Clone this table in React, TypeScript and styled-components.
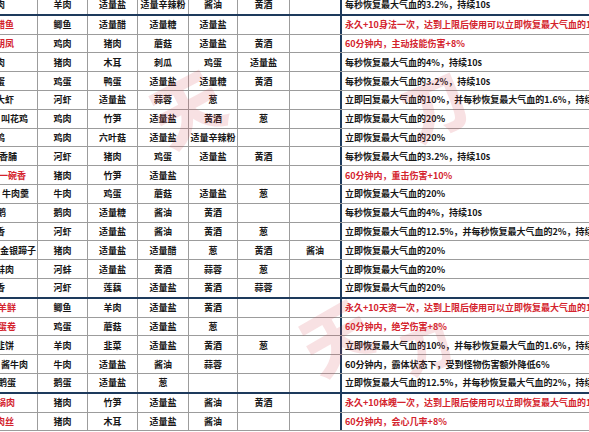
import React from "react";
import styled, { createGlobalStyle } from "styled-components";

const GlobalStyle = createGlobalStyle`
  html, body {
    margin: 0;
    padding: 0;
    background: #fff;
  }
  body {
    width: 589px;
    height: 432px;
    overflow: hidden;
    font-family: "Noto Sans CJK SC", "Noto Sans", sans-serif;
  }
`;

const NAVY = "#1d3a5c";
const GRID = "#9c9c9c";
const RED = "#d4232d";

const Sheet = styled.div`
  position: relative;
  width: 589px;
  height: 432px;
  overflow: hidden;
  background: #fff;
`;

const Table = styled.div`
  display: flex;
  flex-direction: column;
  margin-top: -4px;
`;

const Row = styled.div<{ $end?: boolean }>`
  display: grid;
  grid-template-columns: 38px 50px 50px 51px 49px 52px 50px 260px;
  box-sizing: border-box;
  height: ${(p) => (p.$end ? 19.8 : 18.8)}px;
  border-bottom: ${(p) => (p.$end ? `2px solid ${NAVY}` : `1px solid ${GRID}`)};
`;

const Cell = styled.div<{ $red?: boolean; $last?: boolean }>`
  display: flex;
  align-items: center;
  justify-content: center;
  box-sizing: border-box;
  border-right: ${(p) => (p.$last ? "none" : `1px solid ${GRID}`)};
  font-size: 9px;
  font-weight: 700;
  line-height: 1;
  color: ${(p) => (p.$red ? RED : "#161616")};
  white-space: nowrap;
  overflow: hidden;
`;

const NameCell = styled(Cell)<{ $pr: number }>`
  justify-content: flex-end;
  padding-right: ${(p) => p.$pr}px;
`;

const DescCell = styled(Cell)`
  justify-content: flex-start;
  padding-left: 3px;
  border-right: none;
  border-left: 2px solid ${NAVY};
`;

const Watermark = styled.div`
  position: absolute;
  inset: 0;
  pointer-events: none;
`;

const Stamp = styled.span<{ $x: number; $y: number; $size: number; $rot: number }>`
  position: absolute;
  left: ${(p) => p.$x}px;
  top: ${(p) => p.$y}px;
  font-size: ${(p) => p.$size}px;
  font-weight: 900;
  line-height: 1;
  color: rgba(214, 70, 80, 0.16);
  transform: rotate(${(p) => p.$rot}deg);
  white-space: nowrap;
`;

type Recipe = {
  name: string;
  pr: number;
  red?: boolean;
  items: string[];
  desc: string;
  end?: boolean;
};

const recipes: Recipe[] = [
  { name: "葱爆羊肉", pr: 32, items: ["羊肉", "适量盐", "适量辛辣粉", "酱油", "黄酒", ""], desc: "每秒恢复最大气血的3.2%，持续10s", end: true },
  { name: "西湖醋鱼", pr: 23, red: true, items: ["鲫鱼", "适量醋", "适量糖", "适量盐", "", ""], desc: "永久+10身法一次，达到上限后使用可以立即恢复最大气血的10%" },
  { name: "百鸟朝凤", pr: 23, red: true, items: ["鸡肉", "猪肉", "蘑菇", "适量盐", "黄酒", ""], desc: "60分钟内，主动技能伤害+8%" },
  { name: "木须肉", pr: 32, items: ["猪肉", "木耳", "刺瓜", "鸡蛋", "适量盐", ""], desc: "每秒恢复最大气血的4%，持续10s" },
  { name: "双黄蛋", pr: 32, items: ["鸡蛋", "鸭蛋", "适量盐", "适量糖", "黄酒", ""], desc: "每秒恢复最大气血的3.2%，持续10s" },
  { name: "油焖大虾", pr: 23, items: ["河虾", "适量盐", "蒜蓉", "葱", "", ""], desc: "立即回复最大气血的10%，并每秒恢复最大气血的1.6%，持续10s" },
  { name: "叫花鸡", pr: 9, items: ["鸡肉", "竹笋", "适量盐", "黄酒", "葱", ""], desc: "立即恢复最大气血的20%" },
  { name: "菇炖鸡", pr: 32, items: ["鸡肉", "六叶菇", "适量盐", "适量辛辣粉", "", ""], desc: "立即恢复最大气血的20%" },
  { name: "虾仁香脯", pr: 20, items: ["河虾", "猪肉", "鸡蛋", "适量盐", "黄酒", ""], desc: "每秒恢复最大气血的3.2%，持续10s" },
  { name: "一碗香", pr: 11, red: true, items: ["猪肉", "竹笋", "适量盐", "", "", ""], desc: "60分钟内，重击伤害+10%" },
  { name: "牛肉羹", pr: 8, items: ["牛肉", "鸡蛋", "蘑菇", "适量盐", "葱", ""], desc: "立即恢复最大气血的20%" },
  { name: "烧鹅", pr: 31, items: ["鹅肉", "适量糖", "酱油", "黄酒", "", ""], desc: "每秒恢复最大气血的4%，持续10s" },
  { name: "酒香", pr: 32, items: ["河虾", "适量盐", "酱油", "黄酒", "葱", ""], desc: "立即恢复最大气血的12.5%，并每秒恢复最大气血的2%，持续10s" },
  { name: "金银蹄子", pr: 1, items: ["猪肉", "适量盐", "适量醋", "葱", "黄酒", "酱油"], desc: "立即恢复最大气血的20%" },
  { name: "炒蚌肉", pr: 23, items: ["河蚌", "适量盐", "黄酒", "蒜蓉", "葱", ""], desc: "立即恢复最大气血的20%" },
  { name: "藕香", pr: 32, items: ["河虾", "莲藕", "适量盐", "黄酒", "蒜蓉", ""], desc: "立即恢复最大气血的20%", end: true },
  { name: "鱼羊鲜", pr: 21, red: true, items: ["鲫鱼", "羊肉", "适量盐", "黄酒", "", ""], desc: "永久+10天资一次，达到上限后使用可以立即恢复最大气血的10%" },
  { name: "菇蛋卷", pr: 21, red: true, items: ["鸡蛋", "蘑菇", "适量盐", "葱", "", ""], desc: "60分钟内，绝学伤害+8%" },
  { name: "羊肉韭饼", pr: 23, items: ["羊肉", "韭菜", "适量盐", "黄酒", "葱", ""], desc: "立即恢复最大气血的10%，并每秒恢复最大气血的1.6%，持续10s" },
  { name: "酱牛肉", pr: 9, items: ["牛肉", "适量盐", "酱油", "蒜蓉", "", ""], desc: "60分钟内，霸体状态下，受到怪物伤害额外降低6%" },
  { name: "蒸鹅蛋", pr: 21, items: ["鹅蛋", "适量盐", "葱", "", "", ""], desc: "立即恢复最大气血的12.5%，并每秒恢复最大气血的2%，持续10s", end: true },
  { name: "回锅肉", pr: 22, red: true, items: ["猪肉", "竹笋", "适量盐", "酱油", "黄酒", ""], desc: "永久+10体魄一次，达到上限后使用可以立即恢复最大气血的10%" },
  { name: "木须肉丝", pr: 23, red: true, items: ["猪肉", "木耳", "适量盐", "酱油", "", ""], desc: "60分钟内，会心几率+8%" },
];

export default function App() {
  return (
    <>
      <GlobalStyle />
      <Sheet>
        <Table>
          {recipes.map((r, i) => (
            <Row key={i} $end={r.end}>
              <NameCell $pr={r.pr} $red={r.red}>
                {r.name}
              </NameCell>
              {r.items.map((it, j) => (
                <Cell key={j} $last={j === r.items.length - 1}>
                  {it}
                </Cell>
              ))}
              <DescCell $red={r.red}>{r.desc}</DescCell>
            </Row>
          ))}
        </Table>
        <Watermark>
          <Stamp $x={150} $y={70} $size={72} $rot={-28}>
            天
          </Stamp>
          <Stamp $x={400} $y={70} $size={66} $rot={-24}>
            刀
          </Stamp>
          <Stamp $x={300} $y={300} $size={70} $rot={-30}>
            天
          </Stamp>
          <Stamp $x={400} $y={320} $size={52} $rot={-20}>
            刀
          </Stamp>
        </Watermark>
      </Sheet>
    </>
  );
}
